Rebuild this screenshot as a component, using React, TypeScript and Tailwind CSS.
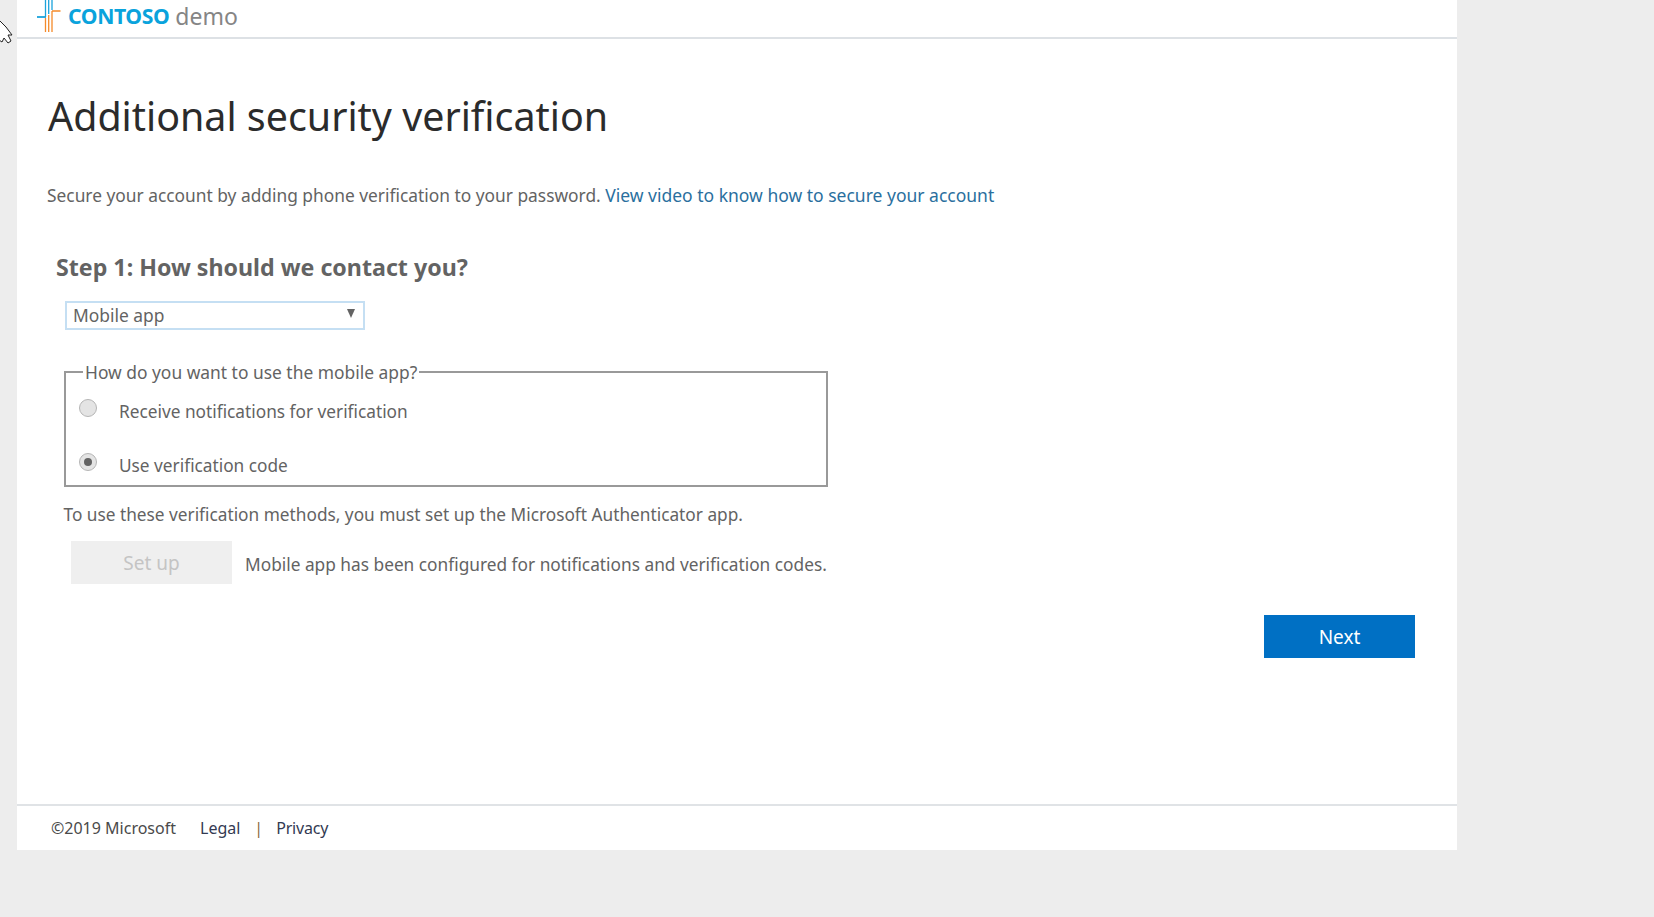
export default function App() {
  return (
    <div className="relative h-[917px] w-[1654px] overflow-hidden bg-[#ededed] font-['Noto_Sans','Open_Sans',sans-serif] text-[#636363]">
      <svg className="absolute left-0 top-[15px]" width="17" height="29" viewBox="0 0 17 29">
        <path d="M0.5 13 L0.5 0.5 L9 9 L15 17 L11 17 L14 23 L11 25 L7 20 L5 24 L2 22 Z" transform="translate(-3,3)" fill="#fff" stroke="#222" strokeWidth="1" />
      </svg>
      <div className="ml-[17px] flex h-[850px] w-[1440px] flex-col bg-white">
        <header className="flex h-[39px] shrink-0 items-center border-b-2 border-[#dde1e5] pl-[20px]">
          <svg width="24" height="32" viewBox="0 0 24 32" className="-mt-[5px] shrink-0">
            <g fill="none">
              <path d="M8.5 0 V17 M11.7 0 V14 M15 0 V10" stroke="#1ba3dc" strokeWidth="1.3" />
              <path d="M0 17 H9" stroke="#1ba3dc" strokeWidth="1.8" />
              <path d="M8.5 18 V32 M11.7 15 V32 M15 11 V32 M15 11 H23.5" stroke="#f58a2a" strokeWidth="1.3" />
            </g>
          </svg>
          <span className="ml-[7px] -mt-[5px] text-[21.2px] font-bold leading-none tracking-[-0.4px] text-[#0aa3dc]">CONTOSO</span>
          <span className="ml-[6px] -mt-[5px] text-[23px] leading-none text-[#858585]">demo</span>
        </header>
        <main className="flex flex-1 flex-col">
          <h1 className="ml-[31px] mt-[49px] text-[39.4px] leading-[56px] text-[#2b2b2b]">Additional security verification</h1>
          <p className="ml-[30px] mt-[39px] text-[17.35px] leading-[24px]">
            Secure your account by adding phone verification to your password.{" "}
            <a className="text-[17.5px] text-[#2a6f9e]">View video to know how to secure your account</a>
          </p>
          <h2 className="ml-[39px] mt-[44px] text-[23.2px] font-bold leading-[32px]">Step 1: How should we contact you?</h2>
          <div className="relative ml-[48px] mt-[18px] flex h-[29px] w-[300px] items-center border-2 border-[#c5dff3] pl-[6px] text-[17.4px]">
            Mobile app
            <span className="absolute right-[8px] top-[6px] h-0 w-0 border-x-[4.5px] border-t-[9px] border-x-transparent border-t-[#636363]" />
          </div>
          <fieldset className="ml-[47px] mt-[30px] h-[127px] w-[764px] border-2 border-[#999999] pl-[13px]">
            <legend className="ml-[4px] px-[2px] text-[17.4px] leading-[24px]">How do you want to use the mobile app?</legend>
            <label className="mt-[12px] flex h-[30px] items-center gap-[22px]">
              <span className="mb-[6px] h-[18px] w-[18px] rounded-full border border-[#b5b5b5] bg-[#e4e4e4]" />
              <span className="pt-[2px] text-[17.25px]">Receive notifications for verification</span>
            </label>
            <label className="mt-[24px] flex h-[30px] items-center gap-[22px]">
              <span className="mb-[6px] flex h-[18px] w-[18px] items-center justify-center rounded-full border border-[#b5b5b5] bg-[#e4e4e4]">
                <span className="h-[8px] w-[8px] rounded-full bg-[#636363]" />
              </span>
              <span className="pt-[2px] text-[17.25px]">Use verification code</span>
            </label>
          </fieldset>
          <p className="ml-[46.5px] mt-[16px] text-[17.25px] leading-[24px]">To use these verification methods, you must set up the Microsoft Authenticator app.</p>
          <div className="ml-[54px] mt-[14px] flex items-center gap-[13px]">
            <button className="h-[43px] w-[161px] bg-[#efefef] pt-[2px] text-[19px] text-[#c4c4c4]">Set up</button>
            <span className="pt-[5px] text-[17.3px]">Mobile app has been configured for notifications and verification codes.</span>
          </div>
          <div className="mr-[42px] mt-[31px] flex justify-end">
            <button className="h-[43px] w-[151px] bg-[#0070c4] pt-[2px] text-[19px] text-white">Next</button>
          </div>
        </main>
        <footer className="flex h-[46px] shrink-0 items-center gap-[24px] border-t-2 border-[#e0e3e6] pl-[34px] text-[16px] text-[#333a52]">
          <span className="text-[#4a4a4a]">©2019 Microsoft</span>
          <span className="flex items-center gap-[14px]">
            <a>Legal</a>
            <span className="text-[#8a6a3a]">|</span>
            <a className="-ml-[1px] tracking-[-0.2px]">Privacy</a>
          </span>
        </footer>
      </div>
    </div>
  );
}
